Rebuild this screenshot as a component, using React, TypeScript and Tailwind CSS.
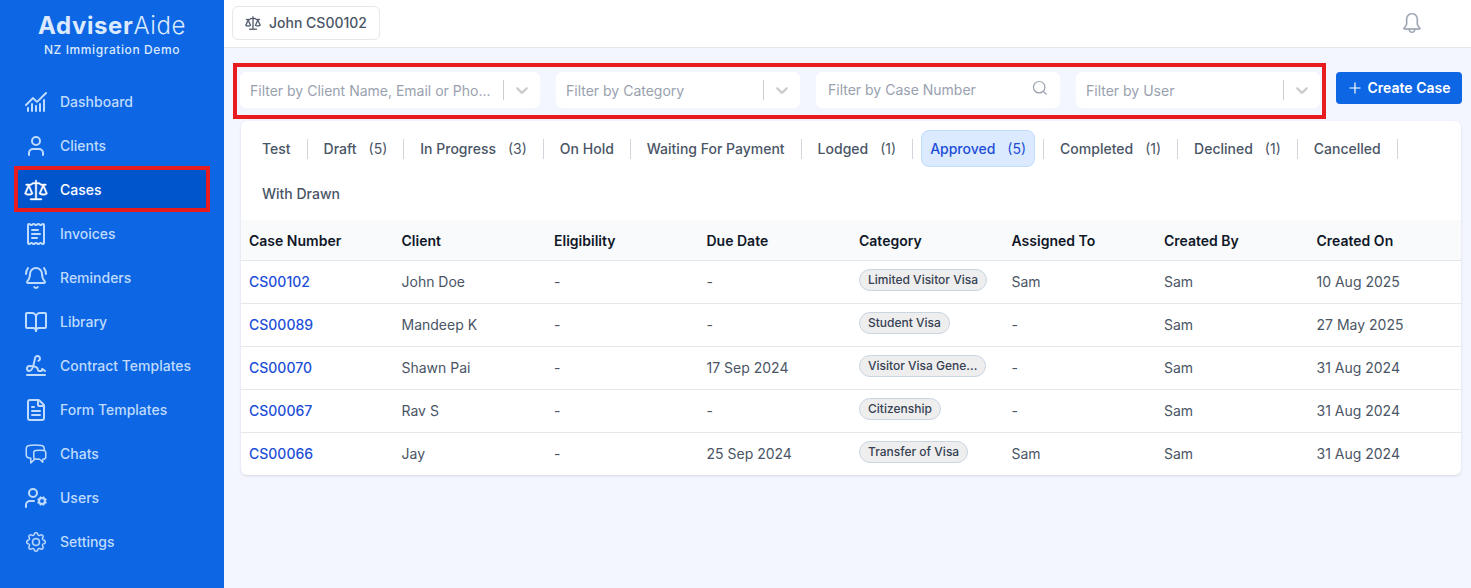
import { useState } from 'react'
import {
  BellRing,
  BookOpen,
  ChartNoAxesCombined,
  FileText,
  ReceiptText,
  Signature,
  User,
  UserCog
} from 'lucide-react'
import { GoLaw } from 'react-icons/go'
import { HiOutlineChatBubbleLeftRight } from 'react-icons/hi2'
import { BsGear } from 'react-icons/bs'
import { SlBell } from 'react-icons/sl'

interface CaseRow {
  id: string
  client: string
  eligibility: string
  dueDate: string
  category: string
  assignedTo: string
  createdBy: string
  createdOn: string
}

const navItems = [
  { label: 'Dashboard', icon: ChartNoAxesCombined, size: 24, stroke: 2 },
  { label: 'Clients', icon: User, size: 24, stroke: 2 },
  { label: 'Cases', icon: GoLaw, size: 24, stroke: 0.4 },
  { label: 'Invoices', icon: ReceiptText, size: 24, stroke: 2 },
  { label: 'Reminders', icon: BellRing, size: 24, stroke: 2 },
  { label: 'Library', icon: BookOpen, size: 24, stroke: 2 },
  { label: 'Contract Templates', icon: Signature, size: 24, stroke: 2 },
  { label: 'Form Templates', icon: FileText, size: 24, stroke: 2 },
  { label: 'Chats', icon: HiOutlineChatBubbleLeftRight, size: 24, stroke: 1.5 },
  { label: 'Users', icon: UserCog, size: 24, stroke: 2 },
  { label: 'Settings', icon: BsGear, size: 20, stroke: 0.25 }
]

const tabs = [
  { label: 'Test' },
  { label: 'Draft', count: 5 },
  { label: 'In Progress', count: 3 },
  { label: 'On Hold' },
  { label: 'Waiting For Payment' },
  { label: 'Lodged', count: 1 },
  { label: 'Approved', count: 5 },
  { label: 'Completed', count: 1 },
  { label: 'Declined', count: 1 },
  { label: 'Cancelled' },
  { label: 'With Drawn' }
]

const columns = [
  'Case Number',
  'Client',
  'Eligibility',
  'Due Date',
  'Category',
  'Assigned To',
  'Created By',
  'Created On'
]

const cases: CaseRow[] = [
  { id: 'CS00102', client: 'John Doe', eligibility: '-', dueDate: '-', category: 'Limited Visitor Visa', assignedTo: 'Sam', createdBy: 'Sam', createdOn: '10 Aug 2025' },
  { id: 'CS00089', client: 'Mandeep K', eligibility: '-', dueDate: '-', category: 'Student Visa', assignedTo: '-', createdBy: 'Sam', createdOn: '27 May 2025' },
  { id: 'CS00070', client: 'Shawn Pai', eligibility: '-', dueDate: '17 Sep 2024', category: 'Visitor Visa Gene...', assignedTo: '-', createdBy: 'Sam', createdOn: '31 Aug 2024' },
  { id: 'CS00067', client: 'Rav S', eligibility: '-', dueDate: '-', category: 'Citizenship', assignedTo: '-', createdBy: 'Sam', createdOn: '31 Aug 2024' },
  { id: 'CS00066', client: 'Jay', eligibility: '-', dueDate: '25 Sep 2024', category: 'Transfer of Visa', assignedTo: 'Sam', createdBy: 'Sam', createdOn: '31 Aug 2024' }
]

const Sidebar = () => (
  <aside className="w-56 shrink-0 bg-[#0d66e4] text-blue-100">
    <div className="flex h-[82px] flex-col items-center pt-2.5">
      <h1 className="text-2xl leading-8 font-light tracking-wide">
        <span className="font-bold">Adviser</span>Aide
      </h1>
      <p className="text-xs leading-4 font-medium tracking-wider">NZ Immigration Demo</p>
    </div>
    <nav className="flex flex-col gap-1 px-4">
      {navItems.map(({ label, icon: Icon, size, stroke }) => {
        const active = label === 'Cases'
        return (
          <a
            key={label}
            className={`relative flex h-10 items-center gap-3 rounded-md px-2 text-sm font-medium ${
              active ? 'bg-[#0055cc] text-white' : 'text-[#bfdbfe]'
            }`}
          >
            <span className="flex w-6 justify-center">
              <Icon size={size} strokeWidth={stroke} />
            </span>
            <span>{label}</span>
            {active && <div className="absolute -inset-x-0.5 -top-1 -bottom-0.5 border-4 border-[#e81c1f]" />}
          </a>
        )
      })}
    </nav>
  </aside>
)

const SelectFilter = ({ placeholder }: { placeholder: string }) => (
  <div className="flex h-9 min-w-0 items-center rounded-md bg-white pl-2.5">
    <span className="min-w-0 flex-1 pt-0.5 text-sm whitespace-nowrap text-gray-400">{placeholder}</span>
    <span className="ml-2.5 h-5 w-px bg-[#cccccc]" />
    <span className="flex w-9 justify-center">
      <svg width="20" height="20" viewBox="0 0 20 20" fill="#cccccc">
        <path d="M4.516 7.548c0.436-0.446 1.043-0.481 1.576 0l3.908 3.747 3.908-3.747c0.533-0.481 1.141-0.446 1.574 0 0.436 0.445 0.408 1.197 0 1.615-0.406 0.418-4.695 4.502-4.695 4.502-0.217 0.223-0.502 0.335-0.787 0.335s-0.57-0.112-0.789-0.335c0 0-4.287-4.084-4.695-4.502s-0.436-1.17 0-1.615z" />
      </svg>
    </span>
  </div>
)

const Filters = () => {
  const [caseNumber, setCaseNumber] = useState('')

  return (
    <div className="flex items-start gap-4">
      <div className="relative grid flex-1 grid-cols-[300px_244px_244px_244px] gap-4">
        <SelectFilter placeholder="Filter by Client Name, Email or Pho..." />
        <SelectFilter placeholder="Filter by Category" />
        <div className="flex h-9 items-center rounded-md bg-white pr-3 pl-3">
          <input
            value={caseNumber}
            onChange={(e) => setCaseNumber(e.target.value)}
            placeholder="Filter by Case Number"
            className="min-w-0 flex-1 text-sm outline-none placeholder:text-gray-400"
          />
          <svg className="mb-1 text-gray-400" width="16" height="16" viewBox="0 0 16 16" fill="none" stroke="currentColor" strokeWidth="1.2">
            <circle cx="7.2" cy="7.2" r="5.7" />
            <path d="M11.3 11.3 14.5 14.5" />
          </svg>
        </div>
        <SelectFilter placeholder="Filter by User" />
        <div className="pointer-events-none absolute -top-[9px] -right-1.5 -bottom-[11px] -left-[7px] border-4 border-[#e81c1f]" />
      </div>
      <button className="flex h-8 w-[126px] items-center justify-center gap-[7px] rounded bg-[#0d66e4] pl-px text-sm font-semibold text-white">
        <svg width="12" height="12" viewBox="0 0 12 12" stroke="currentColor" strokeWidth="1.2">
          <path d="M6 0.5v11M0.5 6h11" />
        </svg>
        Create Case
      </button>
    </div>
  )
}

const StatusTabs = () => {
  const [activeTab, setActiveTab] = useState('Approved')

  return (
    <div className="flex flex-wrap gap-y-2 px-[13px] pt-[9px] pb-2">
      {tabs.map(({ label, count }, i) => (
        <div key={label} className="flex items-center">
          <button
            onClick={() => setActiveTab(label)}
            className={`flex h-[37px] items-center gap-3 rounded-lg px-2 text-sm font-medium ${
              activeTab === label
                ? 'border border-[#bfdbfe] bg-blue-100 text-[#1d4ed8]'
                : 'text-gray-600'
            }`}
          >
            <span>{label}</span>
            {count && <span className="font-normal">({count})</span>}
          </button>
          {i < tabs.length - 1 && <span className="mx-2 h-5 w-px bg-gray-300" />}
        </div>
      ))}
    </div>
  )
}

const CasesTable = () => (
  <table className="w-full table-fixed text-left text-sm">
    <thead className="bg-gray-50 text-gray-900">
      <tr className="h-10 border-b border-gray-200">
        {columns.map((column) => (
          <th key={column} className="px-2 pt-0.5 font-semibold">{column}</th>
        ))}
      </tr>
    </thead>
    <tbody className="text-gray-600">
      {cases.map((row) => (
        <tr key={row.id} className="h-[43px] border-b border-gray-200 last:border-b-0">
          <td className="px-2 font-medium text-[#1d4ed8]">{row.id}</td>
          <td className="px-2">{row.client}</td>
          <td className="px-2">{row.eligibility}</td>
          <td className="px-2">{row.dueDate}</td>
          <td className="px-2">
            <div className="mb-1 flex">
              <span className="rounded-full border border-slate-300 bg-[#eeeeee] px-2 py-0.5 text-xs font-medium whitespace-nowrap text-gray-700">
                {row.category}
              </span>
            </div>
          </td>
          <td className="px-2">{row.assignedTo}</td>
          <td className="px-2">{row.createdBy}</td>
          <td className="px-2">{row.createdOn}</td>
        </tr>
      ))}
    </tbody>
  </table>
)

const App = () => {
  return (
    <div className="flex h-screen overflow-hidden bg-[#f3f6ff] font-[Inter,sans-serif]">
      <Sidebar />
      <div className="flex min-w-0 flex-1 flex-col">
        <header className="flex h-12 items-center justify-between border-b border-gray-200 bg-white pr-[49px] pl-2">
          <button className="mb-px flex h-[34px] w-[148px] items-center gap-2 rounded-md border border-gray-200 pl-3 text-sm font-medium text-gray-600">
            <GoLaw size={16} strokeWidth={0.4} />
            <span>John CS00102</span>
          </button>
          <SlBell size={20} className="mb-0.5 text-gray-400" strokeWidth={10} />
        </header>
        <main className="pt-6 pr-[9px] pl-4">
          <Filters />
          <section className="mt-[13px] mr-px ml-px overflow-hidden rounded-md bg-white shadow">
            <StatusTabs />
            <CasesTable />
          </section>
        </main>
      </div>
    </div>
  )
}

export default App
